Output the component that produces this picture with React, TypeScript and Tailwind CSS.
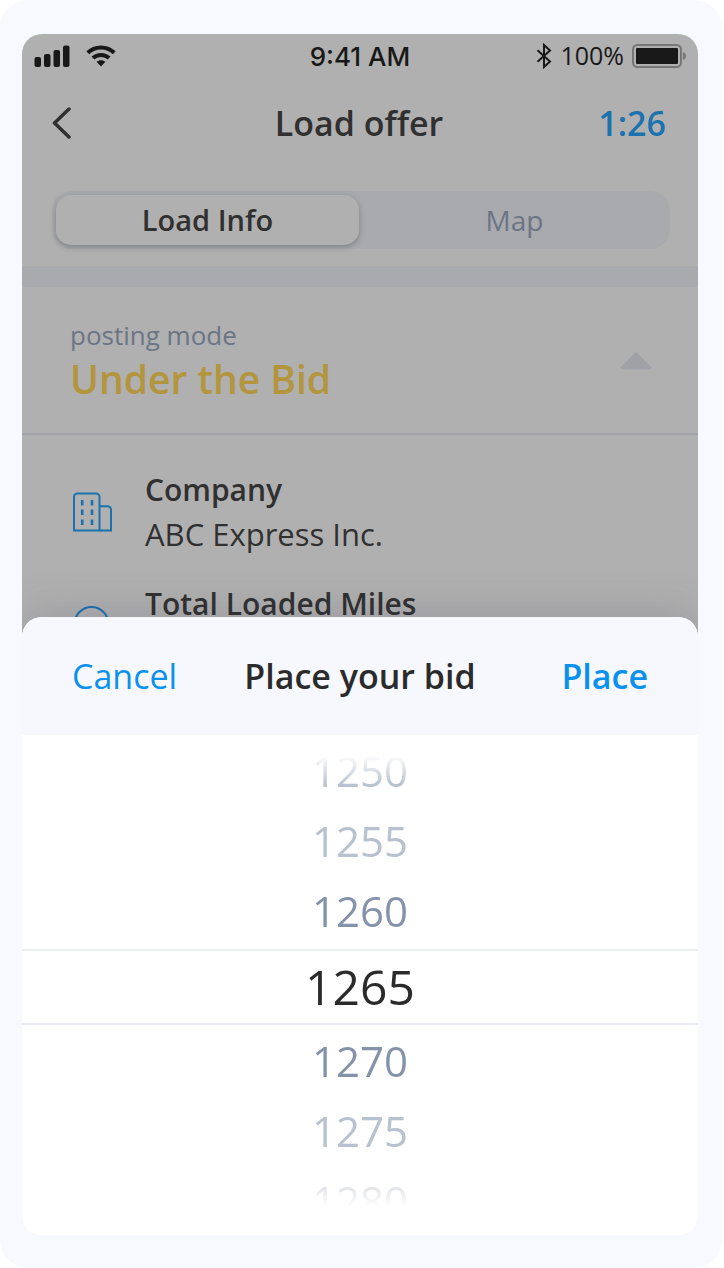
import { useState } from 'react';

const STEP = 5;

// Row look by distance from the selected amount
const ROW_STYLES: Record<string, string> = {
  '-3': 'h-[70px] text-[42px] text-[#b8c1cf]',
  '-2': 'h-[70px] text-[42px] text-[#b8c1cf]',
  '-1': 'h-[70px] mb-1 text-[42px] text-[#8593aa]',
  '0': 'h-[76px] border-y-2 border-[#e9edf1] text-[48px] text-[#2b2b2b]',
  '1': 'h-[70px] text-[42px] text-[#8593aa]',
  '2': 'h-[70px] text-[42px] text-[#b8c1cf]',
  '3': 'h-[70px] text-[42px] text-[#cfd2d8]',
};

function StatusBar() {
  return (
    <div className="grid h-11 grid-cols-[1fr_auto_1fr] items-center px-3 text-[#181818]">
      <div className="flex items-center gap-4">
        <svg className="h-[22px] w-9" viewBox="0 0 36 22" fill="currentColor">
          <rect x="0.5" y="12" width="6.5" height="10" rx="2" />
          <rect x="10" y="9" width="6.5" height="13" rx="2" />
          <rect x="19.5" y="5" width="6.5" height="17" rx="2" />
          <rect x="29" y="0.5" width="6.5" height="21.5" rx="2" />
        </svg>
        <svg className="h-[22px] w-[30px]" viewBox="0 0 30 22" fill="currentColor">
          <path d="M15 0.4c5.7 0 10.900 2.200 14.700 5.900l-2.900 2.900C23.700 6.200 19.600 4.500 15 4.500S6.300 6.200 3.200 9.200L0.300 6.300C4.100 2.600 9.300 0.400 15 0.400z" />
          <path d="M15 7.900c3.700 0 7 1.400 9.500 3.700l-2.900 2.900c-1.700-1.600-4-2.600-6.600-2.600s-4.900 1-6.600 2.600l-2.900-2.900C8 9.300 11.300 7.900 15 7.900z" />
          <path d="M15 15.200c1.700 0 3.200.6 4.400 1.600L15 21.600l-4.400-4.800c1.200-1 2.700-1.600 4.400-1.600z" />
        </svg>
      </div>
      <span className="font-[Inter,sans-serif] text-[26px] font-medium">9:41 AM</span>
      <div className="flex items-center justify-end gap-2">
        <svg className="h-[26px] w-4" viewBox="0 0 16 26" fill="none" stroke="currentColor" strokeWidth="2">
          <path d="M1.500 7.200L14 18.400L8 24V2L14 7.600L1.500 18.800" />
        </svg>
        <span className="text-[25px]">100%</span>
        <svg className="h-[26px] w-[54px]" viewBox="0 0 54 26">
          <rect x="1" y="2" width="48" height="22" rx="4.500" fill="none" stroke="#777" strokeWidth="2" />
          <rect x="4" y="5" width="42" height="16" rx="1" fill="currentColor" />
          <path d="M51 9c4 1.500 4 6.500 0 8z" fill="#777" />
        </svg>
      </div>
    </div>
  );
}

function BuildingIcon() {
  return (
    <svg className="h-10 w-10" viewBox="0 0 40 40" fill="none" stroke="#1a72ae" strokeWidth="2">
      <path d="M1 38.500V5a3.500 3.500 0 0 1 3.500-3.500h18.500A3.500 3.500 0 0 1 26.500 5v33.500z" />
      <path d="M26.500 14.300h8a3.500 3.500 0 0 1 3.500 3.500v20.700H26.500" />
      <path d="M9.200 8v5.500M9.200 17.500V23M9.200 27.500V33M19 8v5.500M19 17.500V23M19 27.500V33" strokeWidth="2.600" />
    </svg>
  );
}

function MilesIcon() {
  return (
    <svg className="h-10 w-10" viewBox="0 0 40 40" fill="none" stroke="#1a72ae" strokeWidth="2">
      <circle cx="18.500" cy="18" r="17" />
      <path d="M18.500 20L26 12" strokeLinecap="round" />
    </svg>
  );
}

export default function App() {
  const [tab, setTab] = useState<'info' | 'map'>('info');
  const [expanded, setExpanded] = useState(true);
  const [bid, setBid] = useState(1265);

  const tabClass = (active: boolean) =>
    active
      ? 'flex-1 rounded-[15px] bg-[#b0b0b0] text-[29px] font-semibold text-[#303030] shadow-[0_2px_6px_rgba(0,0,0,0.25)]'
      : 'flex-1 rounded-[15px] text-[28px] text-[#6b7585]';

  return (
    <div className="bg-white pr-0.5 font-['Open_Sans',sans-serif]">
      <div className="rounded-[28px] bg-[#f7f9fe] pt-[34px] pr-6 pb-[33px] pl-[22px]">
        <div className="overflow-hidden rounded-[20px] bg-white">
          <main className="bg-[#b0b0b0] text-[#303030]">
            <StatusBar />

            <header className="grid h-[90px] grid-cols-[1fr_auto_1fr] items-center pr-8 pl-[30px]">
              <button aria-label="Back" className="w-10">
                <svg className="h-8 w-5" viewBox="0 0 20 32" fill="none" stroke="#303030" strokeWidth="3.500" strokeLinecap="round" strokeLinejoin="round">
                  <path d="M17 2L2.500 16L17 30" />
                </svg>
              </button>
              <h1 className="text-[34px] font-semibold">Load offer</h1>
              <span className="text-right text-[34px] font-semibold text-[#1a72ae]">1:26</span>
            </header>

            <div className="pt-[23px] pr-7 pb-[17px] pl-[30px]">
              <div className="flex h-[58px] gap-1 rounded-[20px] bg-[#a9aaae] p-1">
                <button className={tabClass(tab === 'info')} onClick={() => setTab('info')}>
                  Load Info
                </button>
                <button className={tabClass(tab === 'map')} onClick={() => setTab('map')}>
                  Map
                </button>
              </div>
            </div>
            <div className="h-[21px] bg-[#a9aaae]" />

            <section className="flex items-center justify-between border-b-2 border-[#a3a3aa] pt-[30px] pr-[46px] pb-7 pl-12">
              <div>
                <p className="text-[26px] leading-9 text-[#6b7585]">posting mode</p>
                <p className="text-[39px] leading-[52px] font-semibold text-[#b3953e]">Under the Bid</p>
              </div>
              <button aria-label="Toggle details" aria-expanded={expanded} onClick={() => setExpanded(!expanded)}>
                <svg className="h-[18px] w-8" viewBox="0 0 32 18" fill="#a0a1a7">
                  <path d="M14.500 1.200q1.500-1.400 3 0L30.600 14.500q2 3-1 3H2.400q-3 0-1-3z" />
                </svg>
              </button>
            </section>

            <ul className="flex flex-col gap-[26px] pt-[33px] pl-[51px]">
              <li className="flex h-[88px] items-center gap-8">
                <BuildingIcon />
                <div className="h-full">
                  <h2 className="text-[30px] leading-[44px] font-semibold">Company</h2>
                  <p className="text-[31px] leading-[44px]">ABC Express Inc.</p>
                </div>
              </li>
              <li className="flex h-[88px] items-center gap-8">
                <MilesIcon />
                <div className="h-full">
                  <h2 className="text-[30px] leading-[44px] font-semibold">Total Loaded Miles</h2>
                </div>
              </li>
            </ul>
          </main>

          {/* Bottom sheet slides over the details list */}
          <div className="relative -mt-[53px] rounded-t-[20px] bg-white shadow-[0_-8px_40px_rgba(60,60,90,0.16)]">
            <div className="grid h-[118px] grid-cols-[1fr_auto_1fr] items-center rounded-t-[20px] bg-[#f7f8fe] px-[50px] text-[34px] text-[#0a91ee]">
              <button className="justify-self-start">Cancel</button>
              <h2 className="font-semibold text-[#2b2b2b]">Place your bid</h2>
              <button className="justify-self-end font-semibold">Place</button>
            </div>

            <div
              role="listbox"
              aria-label="Bid amount"
              className="flex flex-col [mask-image:linear-gradient(to_bottom,transparent_20px,black_50px,black_440px,transparent_472px)]"
            >
              {[-3, -2, -1, 0, 1, 2, 3].map((offset) => (
                <button
                  key={offset}
                  role="option"
                  aria-selected={offset === 0}
                  onClick={() => setBid(bid + offset * STEP)}
                  className={ROW_STYLES[offset]}
                >
                  {bid + offset * STEP}
                </button>
              ))}
            </div>
          </div>
        </div>
      </div>
    </div>
  );
}
